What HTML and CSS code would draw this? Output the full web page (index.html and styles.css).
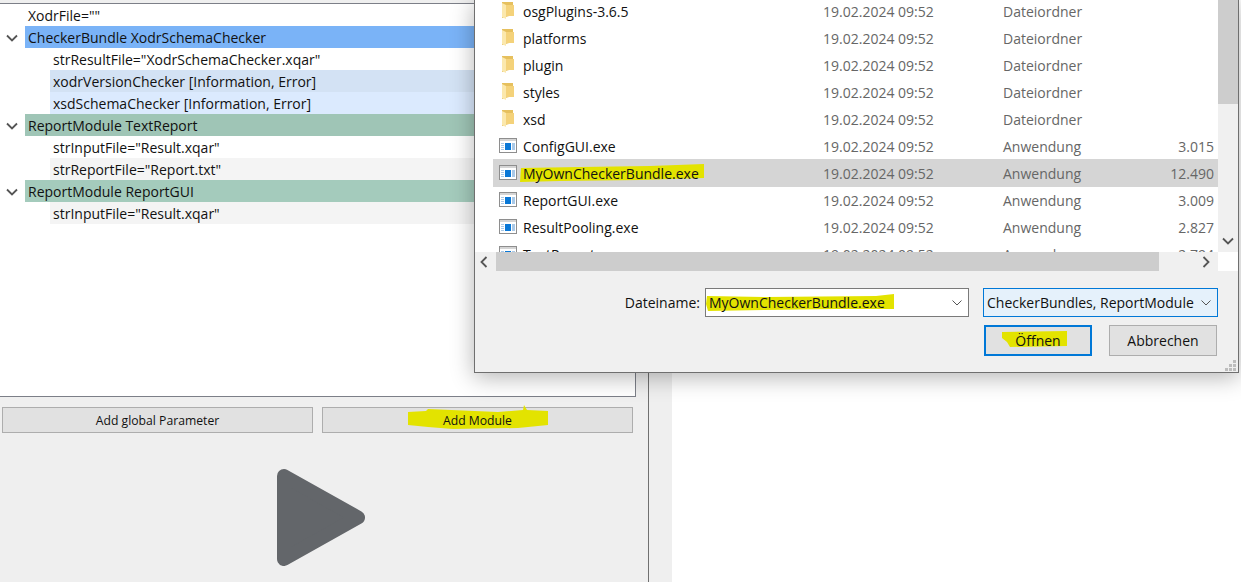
FILE: index.html
```html
<!DOCTYPE html>
<html lang="en">

<head>
    <meta charset="UTF-8">
    <title>ConfigGUI</title>
    <link rel="stylesheet" href="styles.css">
</head>

<body>
    <div class="app">
        <div class="leftPanel">
            <div class="tree">
                <div class="row"><span class="label">XodrFile=""</span></div>
                <div class="row"><svg class="chevron" viewBox="0 0 12 8"><path d="M1 1.5l5 5 5-5"/></svg><span class="label blue">CheckerBundle XodrSchemaChecker</span></div>
                <div class="row child"><span class="label">strResultFile="XodrSchemaChecker.xqar"</span></div>
                <div class="row child"><span class="label blueMid">xodrVersionChecker [Information, Error]</span></div>
                <div class="row child"><span class="label blueLight">xsdSchemaChecker [Information, Error]</span></div>
                <div class="row"><svg class="chevron" viewBox="0 0 12 8"><path d="M1 1.5l5 5 5-5"/></svg><span class="label green">ReportModule TextReport</span></div>
                <div class="row child"><span class="label">strInputFile="Result.xqar"</span></div>
                <div class="row child"><span class="label grey">strReportFile="Report.txt"</span></div>
                <div class="row"><svg class="chevron" viewBox="0 0 12 8"><path d="M1 1.5l5 5 5-5"/></svg><span class="label greenLight">ReportModule ReportGUI</span></div>
                <div class="row child"><span class="label grey">strInputFile="Result.xqar"</span></div>
            </div>
            <div class="treeButtons">
                <button class="flatBtn">Add global Parameter</button>
                <button class="flatBtn">
                    <svg class="marker markerModule" viewBox="0 0 140 25"><path d="M0 7L18 6 20 4 90 7 115 5 116 0 119 5 140 6 140 20 110 23 45 24 20 22 0 20z"/></svg>
                    <span>Add Module</span>
                </button>
            </div>
            <div class="playArea">
                <svg class="playIcon" viewBox="0 0 88 97"><path d="M7 7L81 48.500 7 90z"/></svg>
            </div>
        </div>
        <div class="sideStrip"></div>
        <div class="rightPanel"></div>
    </div>

    <div class="dialog">
        <div class="browser">
            <div class="fileList">
                <div class="fileRow">
                    <svg class="folderIcon" viewBox="0 0 14 17"><path class="folderBack" d="M1 0h11v13l-11 3z"/><path class="folderPage" d="M5 3h8v11H5z"/><path class="folderFront" d="M1 1l4 2v14l-4-2z"/></svg>
                    <span class="name">osgPlugins-3.6.5</span><span class="date">19.02.2024 09:52</span><span class="type">Dateiordner</span><span class="size"></span>
                </div>
                <div class="fileRow">
                    <svg class="folderIcon" viewBox="0 0 14 17"><path class="folderBack" d="M1 0h11v13l-11 3z"/><path class="folderPage" d="M5 3h8v11H5z"/><path class="folderFront" d="M1 1l4 2v14l-4-2z"/></svg>
                    <span class="name">platforms</span><span class="date">19.02.2024 09:52</span><span class="type">Dateiordner</span><span class="size"></span>
                </div>
                <div class="fileRow">
                    <svg class="folderIcon" viewBox="0 0 14 17"><path class="folderBack" d="M1 0h11v13l-11 3z"/><path class="folderPage" d="M5 3h8v11H5z"/><path class="folderFront" d="M1 1l4 2v14l-4-2z"/></svg>
                    <span class="name">plugin</span><span class="date">19.02.2024 09:52</span><span class="type">Dateiordner</span><span class="size"></span>
                </div>
                <div class="fileRow">
                    <svg class="folderIcon" viewBox="0 0 14 17"><path class="folderBack" d="M1 0h11v13l-11 3z"/><path class="folderPage" d="M5 3h8v11H5z"/><path class="folderFront" d="M1 1l4 2v14l-4-2z"/></svg>
                    <span class="name">styles</span><span class="date">19.02.2024 09:52</span><span class="type">Dateiordner</span><span class="size"></span>
                </div>
                <div class="fileRow">
                    <svg class="folderIcon" viewBox="0 0 14 17"><path class="folderBack" d="M1 0h11v13l-11 3z"/><path class="folderPage" d="M5 3h8v11H5z"/><path class="folderFront" d="M1 1l4 2v14l-4-2z"/></svg>
                    <span class="name">xsd</span><span class="date">19.02.2024 09:52</span><span class="type">Dateiordner</span><span class="size"></span>
                </div>
                <div class="fileRow">
                    <svg class="exeIcon" viewBox="0 0 18 15"><rect x=".5" y=".5" width="17" height="14" fill="#fff" stroke="#8e8e8e"/><path d="M1 1h16v2H1z" fill="#d5d5d5"/><path d="M2 5h3v1H2zM2 7h3v1H2zM2 9h3v1H2zM2 11h3v1H2zM13 5h3v7h-3z" fill="#a9c9e8"/><path d="M6 5h6v7H6z" fill="#0a78d6"/></svg>
                    <span class="name">ConfigGUI.exe</span><span class="date">19.02.2024 09:52</span><span class="type">Anwendung</span><span class="size">3.015</span>
                </div>
                <div class="fileRow selected">
                    <svg class="exeIcon" viewBox="0 0 18 15"><rect x=".5" y=".5" width="17" height="14" fill="#fff" stroke="#8e8e8e"/><path d="M1 1h16v2H1z" fill="#d5d5d5"/><path d="M2 5h3v1H2zM2 7h3v1H2zM2 9h3v1H2zM2 11h3v1H2zM13 5h3v7h-3z" fill="#a9c9e8"/><path d="M6 5h6v7H6z" fill="#0a78d6"/></svg>
                    <span class="name">
                        <svg class="marker markerFile" viewBox="0 0 184 18"><path d="M1 4L60 3 130 2 184 0 184 14 120 16 40 17 0 18z"/></svg>
                        <span>MyOwnCheckerBundle.exe</span>
                    </span><span class="date">19.02.2024 09:52</span><span class="type">Anwendung</span><span class="size">12.490</span>
                </div>
                <div class="fileRow">
                    <svg class="exeIcon" viewBox="0 0 18 15"><rect x=".5" y=".5" width="17" height="14" fill="#fff" stroke="#8e8e8e"/><path d="M1 1h16v2H1z" fill="#d5d5d5"/><path d="M2 5h3v1H2zM2 7h3v1H2zM2 9h3v1H2zM2 11h3v1H2zM13 5h3v7h-3z" fill="#a9c9e8"/><path d="M6 5h6v7H6z" fill="#0a78d6"/></svg>
                    <span class="name">ReportGUI.exe</span><span class="date">19.02.2024 09:52</span><span class="type">Anwendung</span><span class="size">3.009</span>
                </div>
                <div class="fileRow">
                    <svg class="exeIcon" viewBox="0 0 18 15"><rect x=".5" y=".5" width="17" height="14" fill="#fff" stroke="#8e8e8e"/><path d="M1 1h16v2H1z" fill="#d5d5d5"/><path d="M2 5h3v1H2zM2 7h3v1H2zM2 9h3v1H2zM2 11h3v1H2zM13 5h3v7h-3z" fill="#a9c9e8"/><path d="M6 5h6v7H6z" fill="#0a78d6"/></svg>
                    <span class="name">ResultPooling.exe</span><span class="date">19.02.2024 09:52</span><span class="type">Anwendung</span><span class="size">2.827</span>
                </div>
                <div class="fileRow">
                    <svg class="exeIcon" viewBox="0 0 18 15"><rect x=".5" y=".5" width="17" height="14" fill="#fff" stroke="#8e8e8e"/><path d="M1 1h16v2H1z" fill="#d5d5d5"/><path d="M2 5h3v1H2zM2 7h3v1H2zM2 9h3v1H2zM2 11h3v1H2zM13 5h3v7h-3z" fill="#a9c9e8"/><path d="M6 5h6v7H6z" fill="#0a78d6"/></svg>
                    <span class="name">TextReport.exe</span><span class="date">19.02.2024 09:52</span><span class="type">Anwendung</span><span class="size">2.794</span>
                </div>
            </div>
            <div class="vScroll">
                <div class="vThumb"></div>
                <svg class="arrow arrowDown" viewBox="0 0 12 8"><path d="M1 1.500l5 5 5-5"/></svg>
            </div>
        </div>
        <div class="hScrollRow">
            <div class="hScroll">
                <svg class="arrow arrowLeft" viewBox="0 0 8 12"><path d="M6.500 1l-5 5 5 5"/></svg>
                <div class="hThumb"></div>
                <svg class="arrow arrowRight" viewBox="0 0 8 12"><path d="M1.500 1l5 5-5 5"/></svg>
            </div>
        </div>
        <div class="dialogForm">
            <div class="nameRow">
                <span class="nameLabel">Dateiname:</span>
                <div class="combo nameCombo">
                    <svg class="marker markerName" viewBox="0 0 188 17"><path d="M1 2L60 3 170 2 188 0 188 15 130 15 60 16 2 17 0 10z"/></svg>
                    <span class="comboText">MyOwnCheckerBundle.exe</span>
                    <svg class="comboArrow" viewBox="0 0 10 6"><path d="M.5.500l4.500 4.500 4.500-4.500"/></svg>
                </div>
                <div class="combo typeCombo">
                    <span class="comboText">CheckerBundles, ReportModule</span>
                    <svg class="comboArrow" viewBox="0 0 10 6"><path d="M.5.500l4.500 4.500 4.500-4.500"/></svg>
                </div>
            </div>
            <div class="btnRow">
                <button class="dlgBtn openBtn">
                    <svg class="marker markerOpen" viewBox="0 0 65 18"><path d="M0 2L65 1 65 16 8 17 5 12 0 8z"/></svg>
                    <span>Öffnen</span>
                </button>
                <button class="dlgBtn">Abbrechen</button>
            </div>
            <svg class="grip" viewBox="0 0 12 12"><path d="M8 0h3v3H8zM4 4h3v3H4zM8 4h3v3H8zM0 8h3v3H0zM4 8h3v3H4zM8 8h3v3H8z"/></svg>
        </div>
    </div>
</body>

</html>
```

FILE: styles.css
```css
* {
  margin: 0;
  padding: 0;
  box-sizing: border-box;
}

html, body {
  width: 100%;
  height: 100%;
  overflow: hidden;
  background: #ffffff;
  font-family: "Open Sans", "Noto Sans", sans-serif;
  color: #111111;
}

.app {
  display: flex;
  height: 582px;
}

.leftPanel {
  width: 649px;
  flex-shrink: 0;
  padding-top: 3px;
  background: #efefef;
  border-right: 1px solid #707070;
  display: flex;
  flex-direction: column;
}

.sideStrip {
  width: 23px;
  background: #efefef;
}

.rightPanel {
  flex: 1;
  background: #ffffff;
}

/* tree */
.tree {
  width: 636px;
  height: 394px;
  background: #ffffff;
  border: 1px solid #7c7f88;
  border-left: none;
  font-size: 14px;
}

.row {
  height: 22px;
  display: flex;
  align-items: center;
  padding-left: 25px;
  position: relative;
}

.row.child {
  padding-left: 50px;
}

.label {
  flex: 1;
  height: 22px;
  line-height: 23px;
  padding-left: 3px;
  white-space: nowrap;
}

.chevron {
  position: absolute;
  left: 6px;
  top: 8px;
  width: 12px;
  height: 8px;
  fill: none;
  stroke: #555555;
  stroke-width: 1.8;
}

.blue { background: #7ab3f7; }
.blueMid { background: #d3e2f4; }
.blueLight { background: #dbeafe; }
.green { background: #9fc5b6; }
.greenLight { background: #a4cbbc; }
.grey { background: #f4f4f4; }

.treeButtons {
  display: flex;
  gap: 9px;
  padding: 10px 0 0 2px;
}

.flatBtn {
  width: 311px;
  height: 26px;
  background: #e1e1e1;
  border: 1px solid #adadad;
  font-family: "Open Sans", sans-serif;
  font-size: 12.2px;
  color: #111111;
  position: relative;
  isolation: isolate;
}

.playArea {
  flex: 1;
  display: flex;
  justify-content: center;
  padding: 36px 6px 0 0;
}

.playIcon {
  width: 88px;
  height: 97px;
  fill: #63666a;
  stroke: #63666a;
  stroke-width: 14;
  stroke-linejoin: round;
}

/* highlighter strokes */
.marker {
  position: absolute;
  z-index: -1;
  fill: #e3e300;
}

.markerModule {
  left: 85px;
  top: -3px;
  width: 140px;
  height: 25px;
}

.markerFile {
  left: -3px;
  top: 4px;
  width: 184px;
  height: 18px;
}

.markerName {
  left: 0;
  top: 5px;
  width: 188px;
  height: 17px;
}

.markerOpen {
  left: 16px;
  top: 3px;
  width: 65px;
  height: 18px;
}

/* file dialog */
.dialog {
  position: absolute;
  left: 474px;
  top: -1px;
  width: 765px;
  height: 374px;
  background: #f0f0f0;
  border: 1px solid #6f6f6f;
  box-shadow: 0 4px 22px rgba(0, 0, 0, 0.3);
  display: flex;
  flex-direction: column;
  font-size: 14px;
}

.browser {
  height: 252px;
  display: flex;
  background: #ffffff;
}

.fileList {
  width: 743px;
  padding-left: 18px;
  overflow: hidden;
}

.fileRow {
  height: 27px;
  display: grid;
  grid-template-columns: 24px 300px 180px 1fr auto;
  align-items: center;
  padding: 0 4px 0 6px;
  line-height: 27px;
  isolation: isolate;
  position: relative;
  top: -2px;
}

.fileRow.selected {
  height: 28px;
  margin-top: -1px;
  padding-top: 1px;
  background: #d5d5d5;
}

.name {
  position: relative;
  white-space: nowrap;
  color: #111111;
}

.date, .type, .size {
  color: #666666;
}

.size {
  justify-self: end;
}

.folderIcon {
  width: 14px;
  height: 17px;
  margin: 0 0 3px 2px;
}

.folderBack { fill: #e6c05e; }
.folderFront { fill: #fbe8ad; }
.folderPage { fill: #f4d27a; }

.exeIcon {
  width: 18px;
  height: 15px;
  margin-bottom: 2px;
}

.vScroll {
  width: 20px;
  margin-left: 0;
  background: #f0f0f0;
  display: flex;
  flex-direction: column;
  justify-content: space-between;
  padding-bottom: 7px;
}

.vThumb {
  height: 104px;
  background: #cdcdcd;
}

.arrow {
  fill: none;
  stroke: #555555;
  stroke-width: 1.8;
}

.arrowDown {
  width: 12px;
  height: 8px;
  margin-left: 4px;
}

.hScrollRow {
  height: 19px;
  background: #ffffff;
}

.hScroll {
  width: 743px;
  height: 19px;
  display: flex;
  align-items: center;
  background: #f0f0f0;
}

.hThumb {
  width: 663px;
  height: 19px;
  background: #cdcdcd;
}

.arrowLeft {
  width: 8px;
  height: 12px;
  margin: 0 8px 0 5px;
}

.arrowRight {
  width: 8px;
  height: 12px;
  margin-left: 43px;
}

.dialogForm {
  flex: 1;
  position: relative;
  display: flex;
  flex-direction: column;
  padding: 17px 20px 0 0;
}

.nameRow {
  display: flex;
  justify-content: flex-end;
  align-items: center;
}

.nameLabel {
  margin-right: 5px;
}

.combo {
  height: 29px;
  display: flex;
  align-items: center;
  justify-content: space-between;
  position: relative;
  isolation: isolate;
  white-space: nowrap;
}

.nameCombo {
  width: 264px;
  background: #ffffff;
  border: 1px solid #7a7a7a;
  margin-right: 14px;
  padding: 0 6px 0 3px;
}

.typeCombo {
  width: 235px;
  background: #e5f1fb;
  border: 1px solid #0078d7;
  padding: 0 6px 0 3px;
}

.comboArrow {
  width: 10px;
  height: 6px;
  fill: none;
  stroke: #555555;
  flex-shrink: 0;
}

.btnRow {
  display: flex;
  justify-content: flex-end;
  gap: 17px;
  margin: 8px 1px 0 0;
}

.dlgBtn {
  width: 108px;
  height: 31px;
  background: #e1e1e1;
  border: 1px solid #adadad;
  font-family: "Open Sans", sans-serif;
  font-size: 14px;
  color: #111111;
  position: relative;
  isolation: isolate;
}

.openBtn {
  border: 2px solid #0078d7;
}

.grip {
  position: absolute;
  right: 1px;
  bottom: 0;
  width: 12px;
  height: 12px;
  fill: #bdbdbd;
}
```
